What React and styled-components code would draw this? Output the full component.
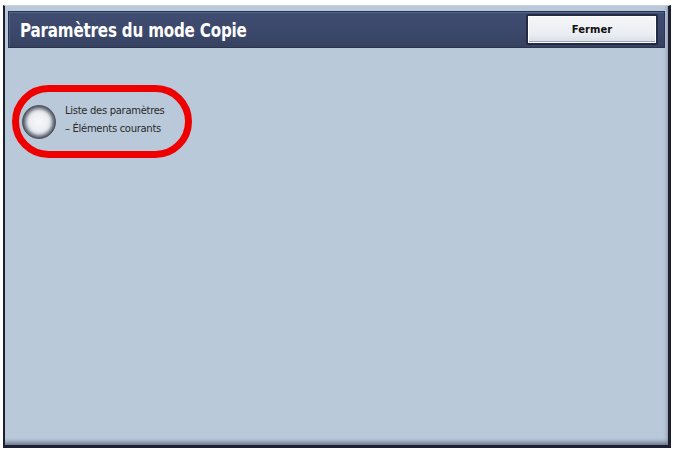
import React from "react";
import styled, { createGlobalStyle } from "styled-components";

const Global = createGlobalStyle`
  html, body { margin: 0; padding: 0; background: #ffffff; }
  body { width: 673px; height: 451px; overflow: hidden; font-family: "DejaVu Sans", sans-serif; }
`;

const Frame = styled.div`
  box-sizing: border-box;
  margin: 5px 0 0 3px;
  width: 668px;
  height: 443px;
  display: flex;
  flex-direction: column;
  background: #b9c9da;
  border-left: 2px solid #1c2030;
  border-right: 3px solid #1c2030;
  border-bottom: 3px solid #1c2030;
  border-top: 1px solid #c9d4df;
  box-shadow: inset -3px -6px 4px -3px #6d7a8e;
`;

const TitleBar = styled.div`
  box-sizing: border-box;
  margin: 5px 3px 0 3px;
  height: 37px;
  display: flex;
  align-items: center;
  justify-content: space-between;
  padding: 0 6px 0 11px;
  background: linear-gradient(#404d72, #3b486b 60%, #36425f);
  border: 1px solid #2a3350;
  box-shadow: inset 0 1px 0 #56638a, inset 1px 0 0 #4d5a80;
`;

const Title = styled.h1`
  margin: 0;
  color: #ffffff;
  font-family: "DejaVu Sans Condensed", "DejaVu Sans", sans-serif;
  font-weight: bold;
  font-size: 20px;
  letter-spacing: -0.2px;
  white-space: nowrap;
  transform: scaleX(0.84);
  transform-origin: left center;
`;

const CloseButton = styled.button`
  box-sizing: border-box;
  width: 132px;
  height: 31px;
  border: 2px solid #232a42;
  border-radius: 2px;
  background: linear-gradient(#f6f7f9, #e9ecf1 70%, #d7dce4);
  box-shadow: inset 0 0 0 1px #ffffff, inset -1px -2px 0 #9aa4b4;
  color: #111111;
  font-family: "DejaVu Sans", sans-serif;
  font-weight: bold;
  font-size: 10px;
  padding: 0;
  cursor: pointer;
`;

const Body = styled.div`
  flex: 1;
  padding: 37px 0 0 7px;
`;

const Highlight = styled.div`
  box-sizing: border-box;
  width: 180px;
  height: 73px;
  border: 7px solid #ee0000;
  border-radius: 37px;
  display: flex;
  align-items: center;
  padding-left: 3px;
  gap: 9px;
`;

const Radio = styled.div`
  box-sizing: border-box;
  width: 34px;
  height: 34px;
  border-radius: 50%;
  flex-shrink: 0;
  background: radial-gradient(circle closest-side at 50% 50%, #f8f8fa 0%, #eceef2 55%, #d9dde3 70%, #a9aeb7 80%, #7a7f89 90%, #565a63 100%);
  border: 1px solid #50545d;
`;

const Label = styled.div`
  font-family: "DejaVu Sans", sans-serif;
  font-size: 10px;
  line-height: 18px;
  color: #2a2a2a;
  letter-spacing: -0.3px;
  margin-top: -4px;
`;

export default function App() {
  return (
    <>
      <Global />
      <Frame>
        <TitleBar>
          <Title>Paramètres du mode Copie</Title>
          <CloseButton>Fermer</CloseButton>
        </TitleBar>
        <Body>
          <Highlight>
            <Radio />
            <Label>
              Liste des paramètres
              <br />– Éléments courants
            </Label>
          </Highlight>
        </Body>
      </Frame>
    </>
  );
}
